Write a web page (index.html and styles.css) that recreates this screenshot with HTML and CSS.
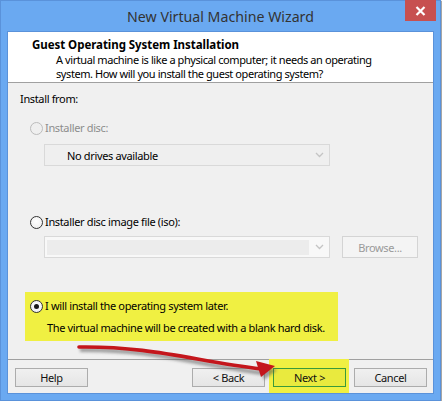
FILE: index.html
```html
<!DOCTYPE html>
<html>
<head>
<meta charset="utf-8">
<link rel="stylesheet" href="styles.css">
</head>
<body>
<div class="window">
  <div class="titlebar">
    <span class="title">New Virtual Machine Wizard</span>
    <div class="close">
      <svg width="11" height="10" viewBox="0 0 11 10"><path d="M1.5 1 L9.5 9 M9.5 1 L1.5 9" stroke="#fff" stroke-width="2.2" fill="none"/></svg>
    </div>
  </div>
  <div class="client">
    <div class="header">
      <div class="h-title">Guest Operating System Installation</div>
      <div class="h-desc">A virtual machine is like a physical computer; it needs an operating<br>system. How will you install the guest operating system?</div>
    </div>
    <div class="body">
      <div class="label install">Install from:</div>
      <div class="radio-row disabled r1"><span class="radio"></span><span>Installer disc:</span></div>
      <div class="combo c1">
        <span class="combo-text">No drives available</span>
        <span class="chev"><svg width="9" height="6" viewBox="0 0 9 6"><path d="M1 1 L4.5 4.5 L8 1" stroke="#c4c4c4" stroke-width="1.3" fill="none"/></svg></span>
      </div>
      <div class="radio-row r2"><span class="radio"></span><span>Installer disc image file (iso):</span></div>
      <div class="iso-row">
        <div class="combo c2">
          <div class="field"></div>
          <span class="chev"><svg width="9" height="6" viewBox="0 0 9 6"><path d="M1 1 L4.5 4.5 L8 1" stroke="#c4c4c4" stroke-width="1.3" fill="none"/></svg></span>
        </div>
        <div class="browse">Browse...</div>
      </div>
      <div class="later">
        <div class="radio-row"><span class="radio checked"></span><span>I will install the operating system later.</span></div>
        <div class="later-note">The virtual machine will be created with a blank hard disk.</div>
      </div>
    </div>
    <div class="footer">
      <div class="hl-next"></div>
      <div class="btn">Help</div>
      <div class="spacer"></div>
      <div class="btn">&lt; Back</div>
      <div class="btn next">Next &gt;</div>
      <div class="btn">Cancel</div>
    </div>
  </div>
  <svg class="arrow" width="441" height="401" viewBox="0 0 441 401">
    <defs>
      <filter id="blur" x="-10%" y="-50%" width="120%" height="200%"><feGaussianBlur stdDeviation="1.6"/></filter>
    </defs>
    <g filter="url(#blur)" opacity="0.55">
      <path d="M80 350 C150 349 195 364 262 373" stroke="#555" stroke-width="4" fill="none"/>
      <path d="M259 365 L277 370 L264 380 Z" fill="#555"/>
    </g>
    <path d="M79 347 C150 346 195 361 261 369" stroke="#c4161c" stroke-width="3.6" fill="none" stroke-linecap="round"/>
    <path d="M256 361 L275 366 L261 377 Z" fill="#c4161c"/>
  </svg>
</div>
</body>
</html>
```
FILE: styles.css
```css
html, body {
  margin: 0;
  padding: 0;
  background: #ffffff;
}
body {
  font-family: "Noto Sans", "Open Sans", sans-serif;
  font-size: 11px;
  letter-spacing: -0.35px;
  color: #000;
}
.window {
  position: relative;
  width: 441px;
  height: 401px;
  box-sizing: border-box;
  border: 1px solid #5a92da;
  background: #6aa9f1;
  display: flex;
  flex-direction: column;
  box-shadow: 1px 1px 1px rgba(0,0,0,0.35);
}
.titlebar {
  position: relative;
  height: 30px;
  display: flex;
  align-items: center;
  justify-content: center;
}
.title {
  font-size: 14.2px;
  letter-spacing: 0;
  color: #333333;
}
.close {
  position: absolute;
  top: -1px;
  right: 4px;
  width: 31px;
  height: 21px;
  background: #c75050;
  display: flex;
  align-items: center;
  justify-content: center;
}
.client {
  margin: 0 6px 6px 6px;
  flex: 1;
  border: 1px solid #5a92da;
  background: #f0f0f0;
  display: flex;
  flex-direction: column;
}
.header {
  height: 45px;
  background: #ffffff;
  border-bottom: 1px solid #a0a0a0;
  padding: 5px 0 0 24px;
}
.h-title {
  font-weight: bold;
  font-size: 11.5px;
  letter-spacing: -0.05px;
  line-height: 15px;
}
.h-desc {
  margin: 1px 0 0 24px;
  line-height: 14px;
  letter-spacing: -0.42px;
}
.body {
  flex: 1;
  padding: 8px 0 0 0;
}
.label {
  line-height: 16px;
}
.install {
  padding-left: 12px;
}
.radio-row {
  display: flex;
  align-items: center;
  gap: 2px;
  line-height: 16px;
}
.r1 { margin: 13px 0 0 22px; }
.r2 { margin: 48px 0 0 22px; }
.radio {
  width: 11px;
  height: 11px;
  border: 1px solid #333;
  border-radius: 50%;
  background: radial-gradient(circle at 50% 40%, #ffffff 0%, #ececec 100%);
  display: flex;
  align-items: center;
  justify-content: center;
}
.disabled { color: #8d8d8d; }
.disabled .radio {
  border-color: #bcbcbc;
  background: #efefef;
}
.radio.checked::after {
  content: "";
  width: 5px;
  height: 5px;
  border-radius: 50%;
  background: #1a1a1a;
}
.combo {
  height: 20px;
  border: 1px solid #d9d9d9;
  display: flex;
  align-items: center;
}
.c1 {
  margin: 8px 0 0 36px;
  width: 284px;
  background: #efefef;
}
.combo-text {
  flex: 1;
  padding-left: 22px;
}
.chev {
  width: 20px;
  display: flex;
  justify-content: center;
  align-items: center;
}
.iso-row {
  display: flex;
  margin: 6px 0 0 36px;
  gap: 12px;
}
.c2 {
  width: 284px;
  background: #f8f8f8;
}
.field {
  flex: 1;
  height: 15px;
  margin-left: 2px;
  background: #ececec;
}
.browse {
  width: 74px;
  height: 20px;
  border: 1px solid #d4d4d4;
  background: #f4f4f4;
  color: #9a9a9a;
  display: flex;
  align-items: center;
  justify-content: center;
}
.later {
  margin: 34px 0 0 17px;
  width: 313px;
  height: 49px;
  box-sizing: border-box;
  background: #f0f042;
  padding: 6px 0 0 5px;
}
.later-note {
  margin: 6px 0 0 17px;
  line-height: 16px;
}
.footer {
  position: relative;
  height: 34px;
  border-top: 1px solid #a0a0a0;
  display: flex;
  align-items: flex-start;
  padding: 8px 6px 0 7px;
  box-sizing: border-box;
  gap: 8px;
}
.spacer { flex: 1; }
.btn {
  position: relative;
  width: 73px;
  height: 19px;
  box-sizing: border-box;
  border: 1px solid #acacac;
  background: linear-gradient(#f0f0f0, #e5e5e5);
  display: flex;
  align-items: center;
  justify-content: center;
  color: #111;
}
.btn.next {
  border-color: #3a9a3a;
  background: #e9ea3e;
}
.hl-next {
  position: absolute;
  left: 261px;
  top: -1px;
  width: 80px;
  height: 34px;
  background: #f0f042;
}
.arrow {
  position: absolute;
  left: -1px;
  top: -1px;
  pointer-events: none;
}
```
